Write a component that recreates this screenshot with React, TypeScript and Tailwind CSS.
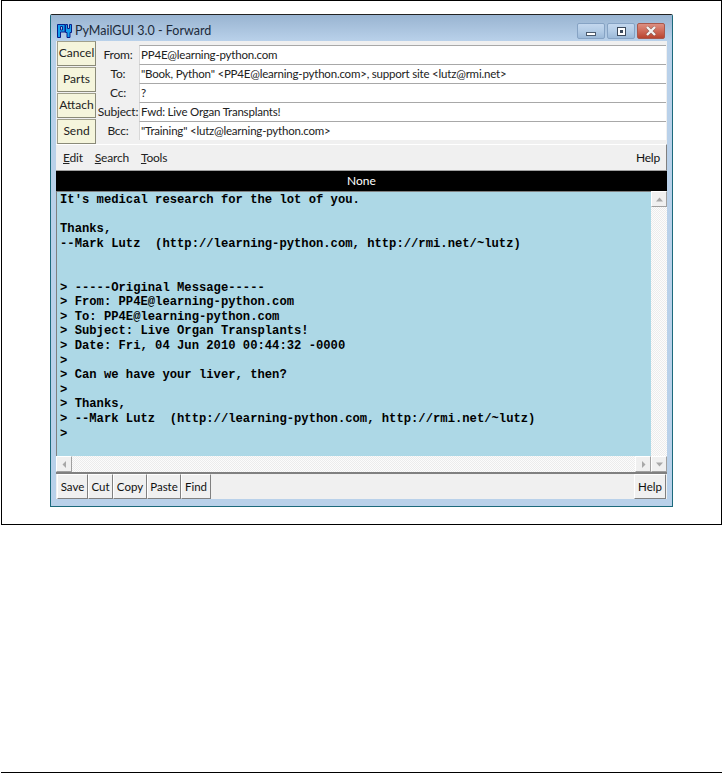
const ui = "font-['Lato','Open_Sans',sans-serif]";

const headers = [
  { label: "From:", value: 'PP4E@learning-python.com' },
  { label: "To:", value: '"Book, Python" <PP4E@learning-python.com>, support site <lutz@rmi.net>' },
  { label: "Cc:", value: "?" },
  { label: "Subject:", value: "Fwd: Live Organ Transplants!" },
  { label: "Bcc:", value: '"Training" <lutz@learning-python.com>' },
];

const tools = [
  { label: "Save", w: "w-[31px]" },
  { label: "Cut", w: "w-[25px]" },
  { label: "Copy", w: "w-[34px]" },
  { label: "Paste", w: "w-[34px]" },
  { label: "Find", w: "w-[30px]" },
];

const body = `It's medical research for the lot of you.

Thanks,
--Mark Lutz  (http://learning-python.com, http://rmi.net/~lutz)


> -----Original Message-----
> From: PP4E@learning-python.com
> To: PP4E@learning-python.com
> Subject: Live Organ Transplants!
> Date: Fri, 04 Jun 2010 00:44:32 -0000
>
> Can we have your liver, then?
>
> Thanks,
> --Mark Lutz  (http://learning-python.com, http://rmi.net/~lutz)
>`;

function PyIcon() {
  return (
    <svg width="15" height="14" viewBox="0 0 15 14" className="shrink-0">
      <path d="M0.5 0.5h7.5v7.5H3.5v5.5h-3z M3.5 2.5v3.5h2V2.500z" fill="#12a0ee" fillRule="evenodd" stroke="#0a1f8a" strokeWidth="1" />
      <path d="M8.500 0.500h2v4h2v-4h2v8h-1.500v5h-3v-5h-1.500z" fill="#12a0ee" stroke="#0a1f8a" strokeWidth="1" />
    </svg>
  );
}

function WinButton({ kind }: { kind: "min" | "max" | "close" }) {
  if (kind === "close") {
    return (
      <div className="w-[28px] h-[16px] rounded-[2px] border border-[#a8584c] bg-gradient-to-b from-[#dc8f82] via-[#cf6a58] to-[#b8442f] flex items-center justify-center">
        <svg width="12" height="10" viewBox="0 0 12 10">
          <path d="M2 1 L10 9 M10 1 L2 9" stroke="#4a4a4a" strokeOpacity="0.45" strokeWidth="3.4" />
          <path d="M2 1 L10 9 M10 1 L2 9" stroke="#f4f4f4" strokeWidth="2.4" />
        </svg>
      </div>
    );
  }
  return (
    <div className="w-[28px] h-[16px] rounded-[2px] border border-[#86a3c4] bg-gradient-to-b from-[#c3d7ee] via-[#b3cce6] to-[#9cb9d8] flex items-center justify-center">
      {kind === "min" ? (
        <div className="w-[10px] h-[4px] mt-[5px] bg-white border border-[#4a5a6d]" />
      ) : (
        <div className="w-[9px] h-[9px] bg-white border border-[#3c4a5c] flex items-center justify-center">
          <div className="w-[3px] h-[3px] bg-[#3c4a5c]" />
        </div>
      )}
    </div>
  );
}

function SideButton({ label }: { label: string }) {
  return (
    <div className="h-[25px] w-[39px] pb-[2px] flex items-center justify-center bg-[#f5f5dc] border border-[#a0a08c] border-r-[#8a8a78] border-b-[#8a8a78] text-[12px] text-[#222]">
      {label}
    </div>
  );
}

function ToolButton({ label, w }: { label: string; w: string }) {
  return (
    <div className={`h-[25px] ${w} flex items-center justify-center bg-[#f0f0f0] border border-[#fff] border-r-[#808080] border-b-[#808080] text-[11.500px] text-[#111]`}>
      {label}
    </div>
  );
}

function ScrollBtn({ d }: { d: string }) {
  return (
    <div className="w-[16px] h-[16px] flex items-center justify-center bg-[#f0f0f0] border border-white border-r-[#a0a0a0] border-b-[#a0a0a0] shrink-0">
      <svg width="9" height="9" viewBox="0 0 9 9">
        <path d={d} fill="#a8a8a8" />
      </svg>
    </div>
  );
}

const track = "bg-[#f4f4f4] bg-[repeating-conic-gradient(#fcfcfc_0%_25%,#ececec_0%_50%)] bg-[length:2px_2px]";

export default function App() {
  return (
    <div className={`h-[774px] w-[722px] bg-white flex flex-col ${ui}`}>
      <div className="h-[525px] ml-[1px] border border-black pt-[13px] pl-[48px]">
        {/* window */}
        <div className="w-[623px] h-[493px] flex flex-col border border-[#1c6a7c] border-t-[#222] rounded-t-[2px] bg-[#b9d1ea]">
          {/* title bar */}
          <div className="h-[26px] flex items-start pl-[6px] pr-[7px] bg-gradient-to-b from-[#99b4d1] to-[#b9d1ea] shrink-0">
            <div className="flex items-center gap-[3px] h-[14px] mt-[9px]">
              <PyIcon />
              <span className="text-[12.500px] text-[#1c2a3a] pt-[1px]">PyMailGUI 3.0 - Forward</span>
            </div>
            <div className="ml-auto flex gap-[2px] pt-[8px]">
              <WinButton kind="min" />
              <WinButton kind="max" />
              <WinButton kind="close" />
            </div>
          </div>

          {/* client */}
          <div className="mx-[5px] flex-1 bg-[#f0f0f0] flex flex-col">
            {/* header area */}
            <div className="h-[103px] flex shrink-0">
              <div className="w-[41px] flex flex-col gap-[1px] pl-[1px]">
                {["Cancel", "Parts", "Attach", "Send"].map((b) => (
                  <SideButton key={b} label={b} />
                ))}
              </div>
              <div className="flex-1 flex flex-col pt-[4px] pr-[1px]">
                {headers.map((h) => (
                  <div key={h.label} className="h-[19px] flex items-center">
                    <div className="w-[42px] text-center text-[12px] tracking-[-0.2px] text-[#222] whitespace-nowrap">{h.label}</div>
                    <div className="flex-1 h-[19px] bg-white border-t border-t-[#a8a8a8] border-l border-l-[#d8d8d8] pl-[1px] text-[11.500px] tracking-[-0.2px] leading-[17px] text-[#222] whitespace-nowrap">
                      {h.value}
                    </div>
                  </div>
                ))}
              </div>
            </div>

            {/* edit toolbar */}
            <div className="h-[27px] flex items-center justify-between bg-[#f0f0f0] border-t border-t-white border-r border-r-[#808080] border-b border-b-[#a0a0a0] pl-[7px] pr-[6px] text-[12px] tracking-[-0.2px] text-[#222] shrink-0">
              <div className="flex gap-[12px]">
                <span><u>E</u>dit</span>
                <span><u>S</u>earch</span>
                <span><u>T</u>ools</span>
              </div>
              <span className="text-[#111]">Help</span>
            </div>

            {/* status bar */}
            <div className="h-[20px] bg-black text-white text-[12px] leading-[19px] text-center shrink-0">None</div>

            {/* text area */}
            <div className="h-[281px] flex flex-col shrink-0">
              <div className="flex h-[265px]">
                <div className="flex-1 bg-[#add8e6] border-l border-l-[#808080] border-t border-t-[#808080] pl-[3px] pt-[1px] overflow-hidden">
                  <pre className="font-['Liberation_Mono',monospace] font-bold text-[12.2px] leading-[14.6px] text-black">{body}</pre>
                </div>
                <div className={`w-[16px] flex flex-col ${track}`}>
                  <ScrollBtn d="M4.5 2.5 L8 6.5 H1 Z" />
                </div>
              </div>
              <div className={`h-[16px] flex ${track}`}>
                <ScrollBtn d="M2.5 4.5 L6 1 V8 Z" />
                <div className="ml-auto flex">
                  <ScrollBtn d="M6.5 4.5 L3 1 V8 Z" />
                  <ScrollBtn d="M4.5 6.5 L1 2.5 H8 Z" />
                </div>
              </div>
            </div>

            {/* bottom toolbar */}
            <div className="flex-1 flex items-start justify-between border-t-2 border-t-[#808080] pr-[1px]">
              <div className="flex pl-[1px]">
                {tools.map((b) => (
                  <ToolButton key={b.label} label={b.label} w={b.w} />
                ))}
              </div>
              <ToolButton label="Help" w="w-[32px]" />
            </div>
          </div>
          <div className="h-[7px] shrink-0" />
        </div>
      </div>
      <div className="mt-auto mb-[1px] ml-[1px] h-[1px] bg-black" />
    </div>
  );
}
